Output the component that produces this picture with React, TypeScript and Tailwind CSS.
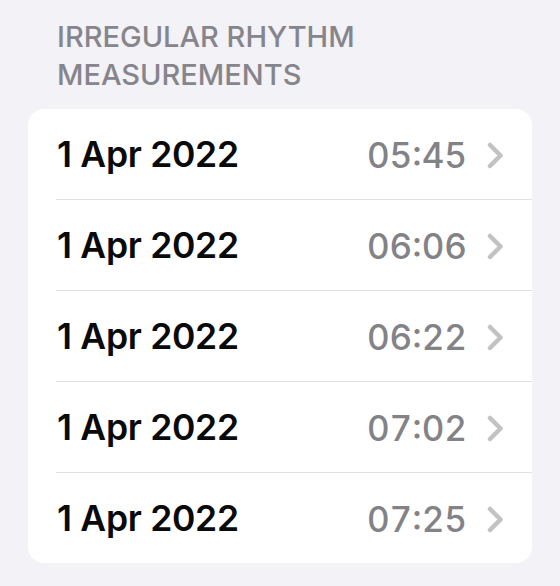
const rows = ["05:45", "06:06", "06:22", "07:02", "07:25"];

function Chevron() {
  return (
    <svg width="17" height="27" viewBox="0 0 17 27" className="shrink-0" fill="none">
      <polyline
        points="3,3 13.5,13.5 3,24"
        stroke="#c2c2c5"
        strokeWidth="4.5"
        strokeLinecap="round"
        strokeLinejoin="round"
      />
    </svg>
  );
}

export default function App() {
  return (
    <div className="w-[560px] h-[586px] bg-[#f2f2f7] pt-[18px] px-[28px] font-['Inter',sans-serif] overflow-hidden">
      <h2 className="pl-[29px] text-[29px] leading-[38px] font-medium text-[#86858b] mb-[15px]">
        IRREGULAR RHYTHM
        <br />
        MEASUREMENTS
      </h2>
      <div className="bg-white rounded-[16px] overflow-hidden">
        {rows.map((time, i) => (
          <div key={time}>
            {i > 0 && <div className="ml-[28px] h-px bg-[#e0e0e3]" />}
            <div className="h-[90px] flex items-center pl-[29px] pr-[28px] pt-[2px]">
              <span className="flex-1 text-[35.5px] font-semibold text-[#0a0a0a] tracking-[-0.3px]">1 Apr 2022</span>
              <span className="text-[35px] font-medium text-[#838387] tabular-nums mr-[20px]">{time}</span>
              <Chevron />
            </div>
          </div>
        ))}
      </div>
    </div>
  );
}
